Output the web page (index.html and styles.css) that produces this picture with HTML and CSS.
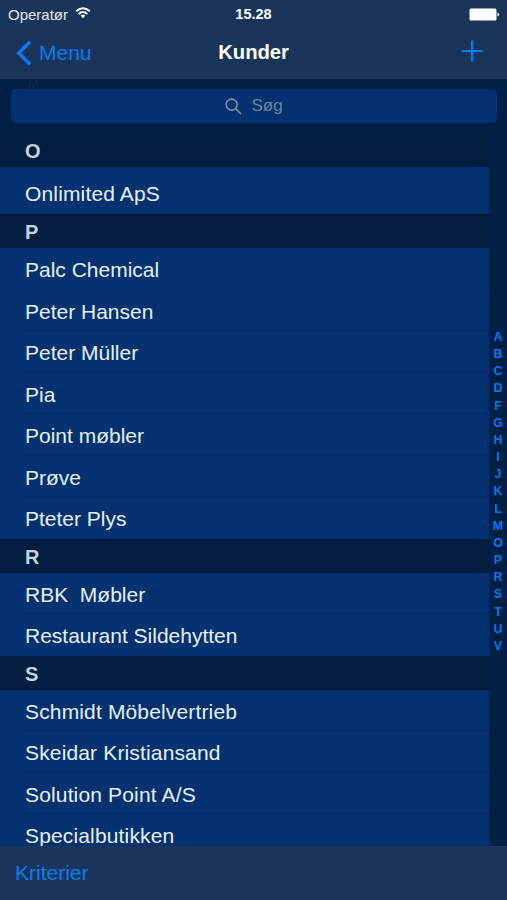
FILE: index.html
```html
<!doctype html>
<html lang="da">
<head>
    <meta charset="UTF-8">
    <meta name="viewport" content="width=device-width, initial-scale=1.0">
    <title>Kunder</title>
    <link rel="stylesheet" href="styles.css">
</head>
<body>
    <header>
        <div class="status-bar">
            <div class="carrier">
                <span>Operatør</span>
                <svg class="wifi" width="16" height="12" viewBox="0 0 16 12">
                    <path d="M1.2 4.3 Q8 -1.7 14.8 4.3" />
                    <path d="M3.7 7 Q8 3.1 12.3 7" />
                    <path class="dot" d="M5.6 8.6 Q8 6.8 10.4 8.6 L8 11.2 Z" />
                </svg>
            </div>
            <div class="clock">15.28</div>
            <svg class="battery" width="31" height="13" viewBox="0 0 31 13">
                <rect x="0.5" y="0.5" width="27" height="12" rx="1.5" />
                <path d="M28.5 4.5 Q30.2 5 30.2 6.5 Q30.2 8 28.5 8.5 Z" />
            </svg>
        </div>
        <nav class="nav-bar">
            <a class="back">
                <svg width="16" height="26" viewBox="0 0 16 26"><path d="M14 1.8 L2.6 13 L14 24.2" /></svg>
                <span>Menu</span>
            </a>
            <h1>Kunder</h1>
            <a class="add">
                <svg width="22" height="22" viewBox="0 0 22 22"><path d="M11 0.5 V21.5 M0.5 11 H21.5" /></svg>
            </a>
        </nav>
    </header>

    <div class="search">
        <span class="under">M</span>
        <div class="search-field">
            <svg width="17" height="17" viewBox="0 0 17 17">
                <circle cx="6.6" cy="6.6" r="5.5" />
                <path d="M10.6 10.6 L16 16" />
            </svg>
            <span>Søg</span>
        </div>
    </div>

    <main>
        <div class="list">
            <h2>O</h2>
            <ul class="first">
                <li>Onlimited ApS</li>
            </ul>
            <h2>P</h2>
            <ul>
                <li>Palc Chemical</li>
                <li>Peter Hansen</li>
                <li>Peter Müller</li>
                <li>Pia</li>
                <li>Point møbler</li>
                <li>Prøve</li>
                <li>Pteter Plys</li>
            </ul>
            <h2>R</h2>
            <ul>
                <li>RBK&nbsp; Møbler</li>
                <li>Restaurant Sildehytten</li>
            </ul>
            <h2>S</h2>
            <ul class="wide">
                <li>Schmidt Möbelvertrieb</li>
                <li>Skeidar Kristiansand</li>
                <li>Solution Point A/S</li>
                <li>Specialbutikken</li>
            </ul>
        </div>
        <div class="index">
            <span>A</span>
            <span>B</span>
            <span>C</span>
            <span>D</span>
            <span>F</span>
            <span>G</span>
            <span>H</span>
            <span>I</span>
            <span>J</span>
            <span>K</span>
            <span>L</span>
            <span>M</span>
            <span>O</span>
            <span>P</span>
            <span>R</span>
            <span>S</span>
            <span>T</span>
            <span>U</span>
            <span>V</span>
        </div>
    </main>

    <footer>
        <a>Kriterier</a>
    </footer>
</body>
</html>
```
FILE: styles.css
```css
* {
    box-sizing: border-box;
}

body {
    margin: 0;
    height: 900px;
    display: flex;
    flex-direction: column;
    overflow: hidden;
    background: #022045;
    color: #e9f1fb;
    font-family: "Liberation Sans", Arial, sans-serif;
    font-size: 21px;
}

header {
    height: 79px;
    flex: none;
    background: #1a355b;
}

.status-bar {
    height: 28px;
    padding: 0 8px;
    display: grid;
    grid-template-columns: 1fr auto 1fr;
    align-items: center;
    font-size: 15px;
    color: #fff;
}

.carrier {
    display: flex;
    align-items: center;
    gap: 7px;
    color: #e3e9f0;
}

.wifi {
    fill: none;
    stroke: #fff;
    stroke-width: 2;
    margin-top: -2px;
}

.wifi .dot {
    fill: #fff;
    stroke: none;
}

.clock {
    font-size: 14.5px;
    font-weight: bold;
}

.battery {
    justify-self: end;
    fill: #fff;
    margin-right: -1px;
}

.nav-bar {
    height: 49px;
    padding: 0 24px 0 16px;
    display: grid;
    grid-template-columns: 1fr auto 1fr;
    align-items: center;
}

.back {
    display: flex;
    align-items: center;
    gap: 7px;
    color: #087cf0;
}

.back svg,
.add svg {
    fill: none;
    stroke: #087cf0;
    stroke-width: 3.4;
}

.add {
    justify-self: end;
    height: 25px;
}

.add svg {
    display: block;
    stroke-width: 2.2;
}

h1 {
    margin: 0 -4px 0 4px;
    font-size: 20.3px;
    letter-spacing: -0.1px;
    color: #fff;
}

.search {
    position: relative;
    flex: none;
    height: 55px;
    padding: 10px 10px 0 11px;
    background: #022045;
}

.under {
    position: absolute;
    left: 28px;
    top: 0;
    font-size: 13px;
    line-height: 10px;
    color: #12294a;
}

.search-field {
    position: relative;
    height: 34px;
    display: flex;
    align-items: center;
    justify-content: center;
    gap: 9px;
    border-radius: 5px;
    background: #04316f;
    color: #728199;
    font-size: 17px;
}

.search-field svg {
    fill: none;
    stroke: #8090a5;
    stroke-width: 1.6;
}

main {
    flex: 1;
    min-height: 0;
    display: flex;
    overflow: hidden;
}

.list {
    width: 489px;
}

h2 {
    margin: 0;
    height: 34px;
    padding-left: 25px;
    line-height: 37px;
    font-size: 20px;
    background: #011d40;
    color: #c7d3da;
}

h2:first-child {
    height: 33px;
    line-height: 35px;
}

ul {
    margin: 0;
    padding: 0;
    list-style: none;
    background: #04316f;
}

li {
    height: 41.5px;
    margin-left: 25px;
    line-height: 43px;
    border-bottom: 1px solid #032c65;
}

li:last-child {
    border-bottom: none;
}

.first li {
    height: 47px;
    line-height: 53px;
    letter-spacing: 0.15px;
}

.wide {
    letter-spacing: 0.15px;
}

.index {
    width: 18px;
    padding-top: 195px;
    display: flex;
    flex-direction: column;
    align-items: center;
    color: #0878ec;
    font-size: 12.5px;
    font-weight: bold;
}

.index span {
    height: 17.17px;
    flex: none;
    line-height: 17px;
}

footer {
    flex: none;
    height: 54px;
    padding-left: 15px;
    line-height: 54px;
    background: #1a355b;
    color: #087cf0;
}
```
